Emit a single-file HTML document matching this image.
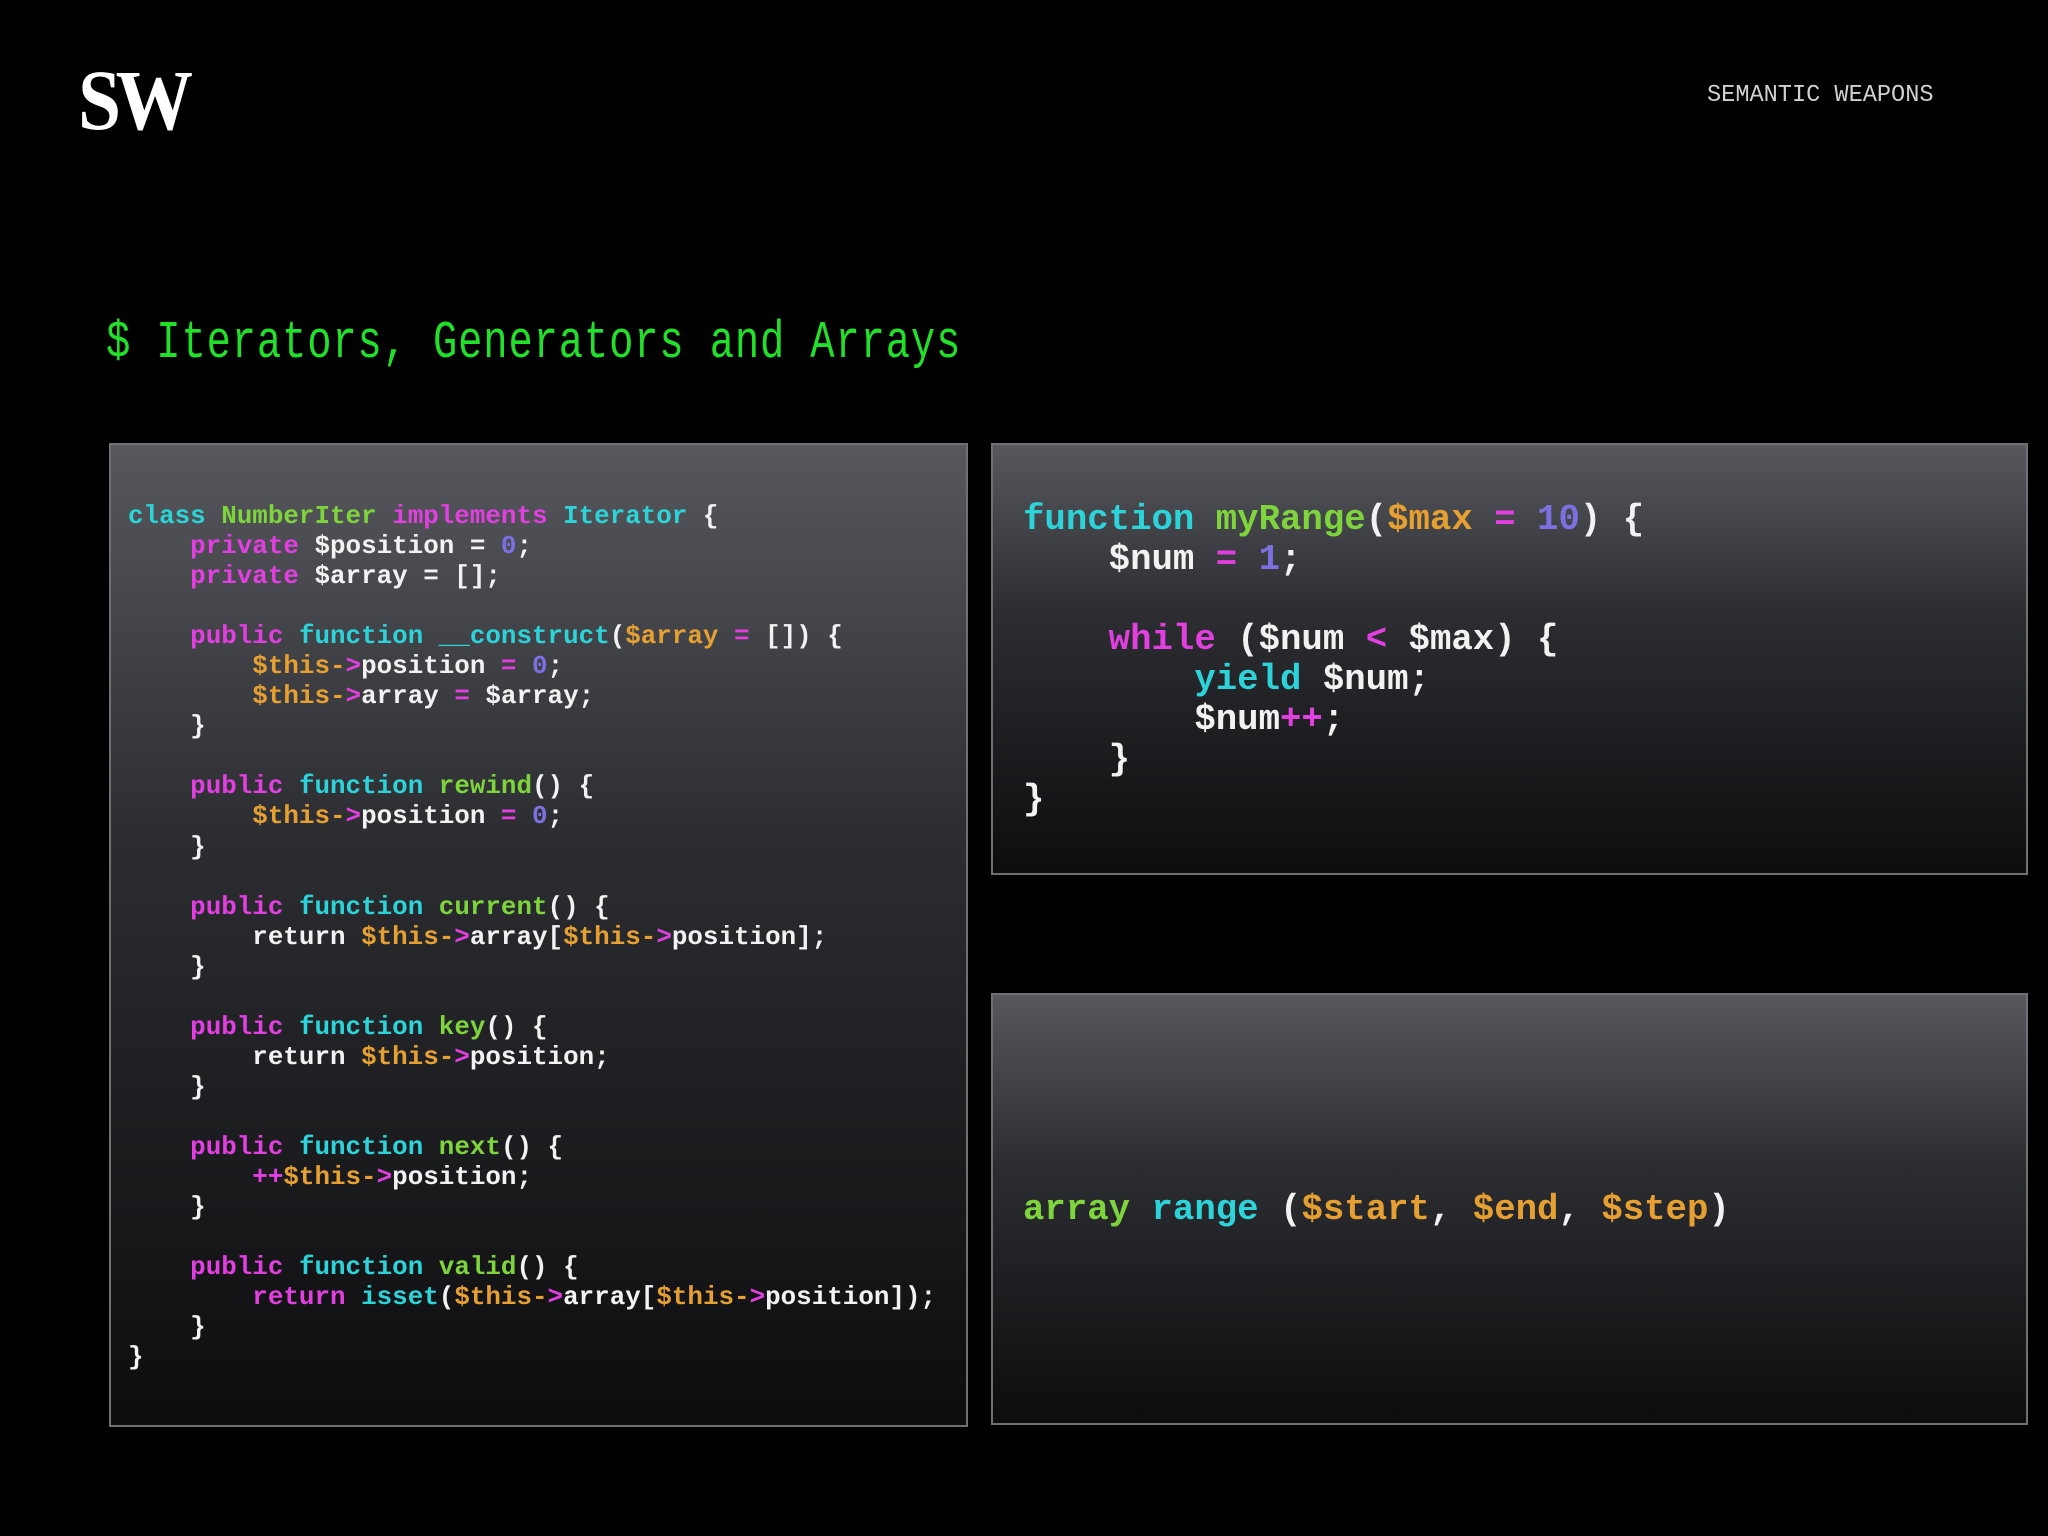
<!DOCTYPE html>
<html><head><meta charset="utf-8"><style>
html,body{margin:0;padding:0;background:#000;width:2048px;height:1536px;overflow:hidden;position:relative}
.logo{position:absolute;left:78px;top:50px;font-family:"Liberation Serif",serif;font-weight:bold;font-size:86px;color:#fff;transform:scaleX(0.9);transform-origin:0 0;letter-spacing:-6px}
.brand{position:absolute;left:1707px;top:82px;font-family:"Liberation Mono",monospace;font-size:23.6px;color:#d0d0d0;line-height:28px}
.title{position:absolute;left:106px;top:316px;font-family:"Liberation Mono",monospace;font-size:40.5px;color:#22e02a;line-height:56px;white-space:pre;transform:scaleY(1.3);transform-origin:0 50%;letter-spacing:0.85px}
.box{position:absolute;box-sizing:border-box;border:2px solid #6f7074;background:linear-gradient(#56585d 0%,#2c2d31 40%,#0d0d0f 100%)}
pre{margin:0;position:absolute;font-family:"Liberation Mono",monospace;font-weight:bold;color:#f2f2f2}
.c{color:#2cd3d8}.g{color:#7ed43c}.m{color:#e13fe0}.o{color:#e6a032}.p{color:#7d70e0}
</style></head><body>
<div class="logo">SW</div>
<div class="brand">SEMANTIC WEAPONS</div>
<div class="title">$ Iterators, Generators and Arrays</div>

<div class="box" style="left:109px;top:443px;width:859px;height:984px"></div>
<pre style="left:128px;top:501px;font-size:25.9px;line-height:30.04px"><span class="c">class</span> <span class="g">NumberIter</span> <span class="m">implements</span> <span class="c">Iterator</span> {
    <span class="m">private</span> $position = <span class="p">0</span>;
    <span class="m">private</span> $array = [];

    <span class="m">public</span> <span class="c">function</span> <span class="c">__construct</span>(<span class="o">$array</span> <span class="m">=</span> []) {
        <span class="o">$this-</span><span class="m">&gt;</span>position <span class="m">=</span> <span class="p">0</span>;
        <span class="o">$this-</span><span class="m">&gt;</span>array <span class="m">=</span> $array;
    }

    <span class="m">public</span> <span class="c">function</span> <span class="g">rewind</span>() {
        <span class="o">$this-</span><span class="m">&gt;</span>position <span class="m">=</span> <span class="p">0</span>;
    }

    <span class="m">public</span> <span class="c">function</span> <span class="g">current</span>() {
        return <span class="o">$this-</span><span class="m">&gt;</span>array[<span class="o">$this-</span><span class="m">&gt;</span>position];
    }

    <span class="m">public</span> <span class="c">function</span> <span class="g">key</span>() {
        return <span class="o">$this-</span><span class="m">&gt;</span>position;
    }

    <span class="m">public</span> <span class="c">function</span> <span class="g">next</span>() {
        <span class="m">++</span><span class="o">$this-</span><span class="m">&gt;</span>position;
    }

    <span class="m">public</span> <span class="c">function</span> <span class="g">valid</span>() {
        <span class="m">return</span> <span class="c">isset</span>(<span class="o">$this-</span><span class="m">&gt;</span>array[<span class="o">$this-</span><span class="m">&gt;</span>position]);
    }
}</pre>

<div class="box" style="left:991px;top:443px;width:1037px;height:432px"></div>
<pre style="left:1023px;top:500px;font-size:35.7px;line-height:40px"><span class="c">function</span> <span class="g">myRange</span>(<span class="o">$max</span> <span class="m">=</span> <span class="p">10</span>) {
    $num <span class="m">=</span> <span class="p">1</span>;

    <span class="m">while</span> ($num <span class="m">&lt;</span> $max) {
        <span class="c">yield</span> $num;
        $num<span class="m">++</span>;
    }
}</pre>

<div class="box" style="left:991px;top:993px;width:1037px;height:432px"></div>
<pre style="left:1023px;top:1190px;font-size:35.7px;line-height:40px"><span class="g">array</span> <span class="c">range</span> (<span class="o">$start</span>, <span class="o">$end</span>, <span class="o">$step</span>)</pre>
</body></html>
